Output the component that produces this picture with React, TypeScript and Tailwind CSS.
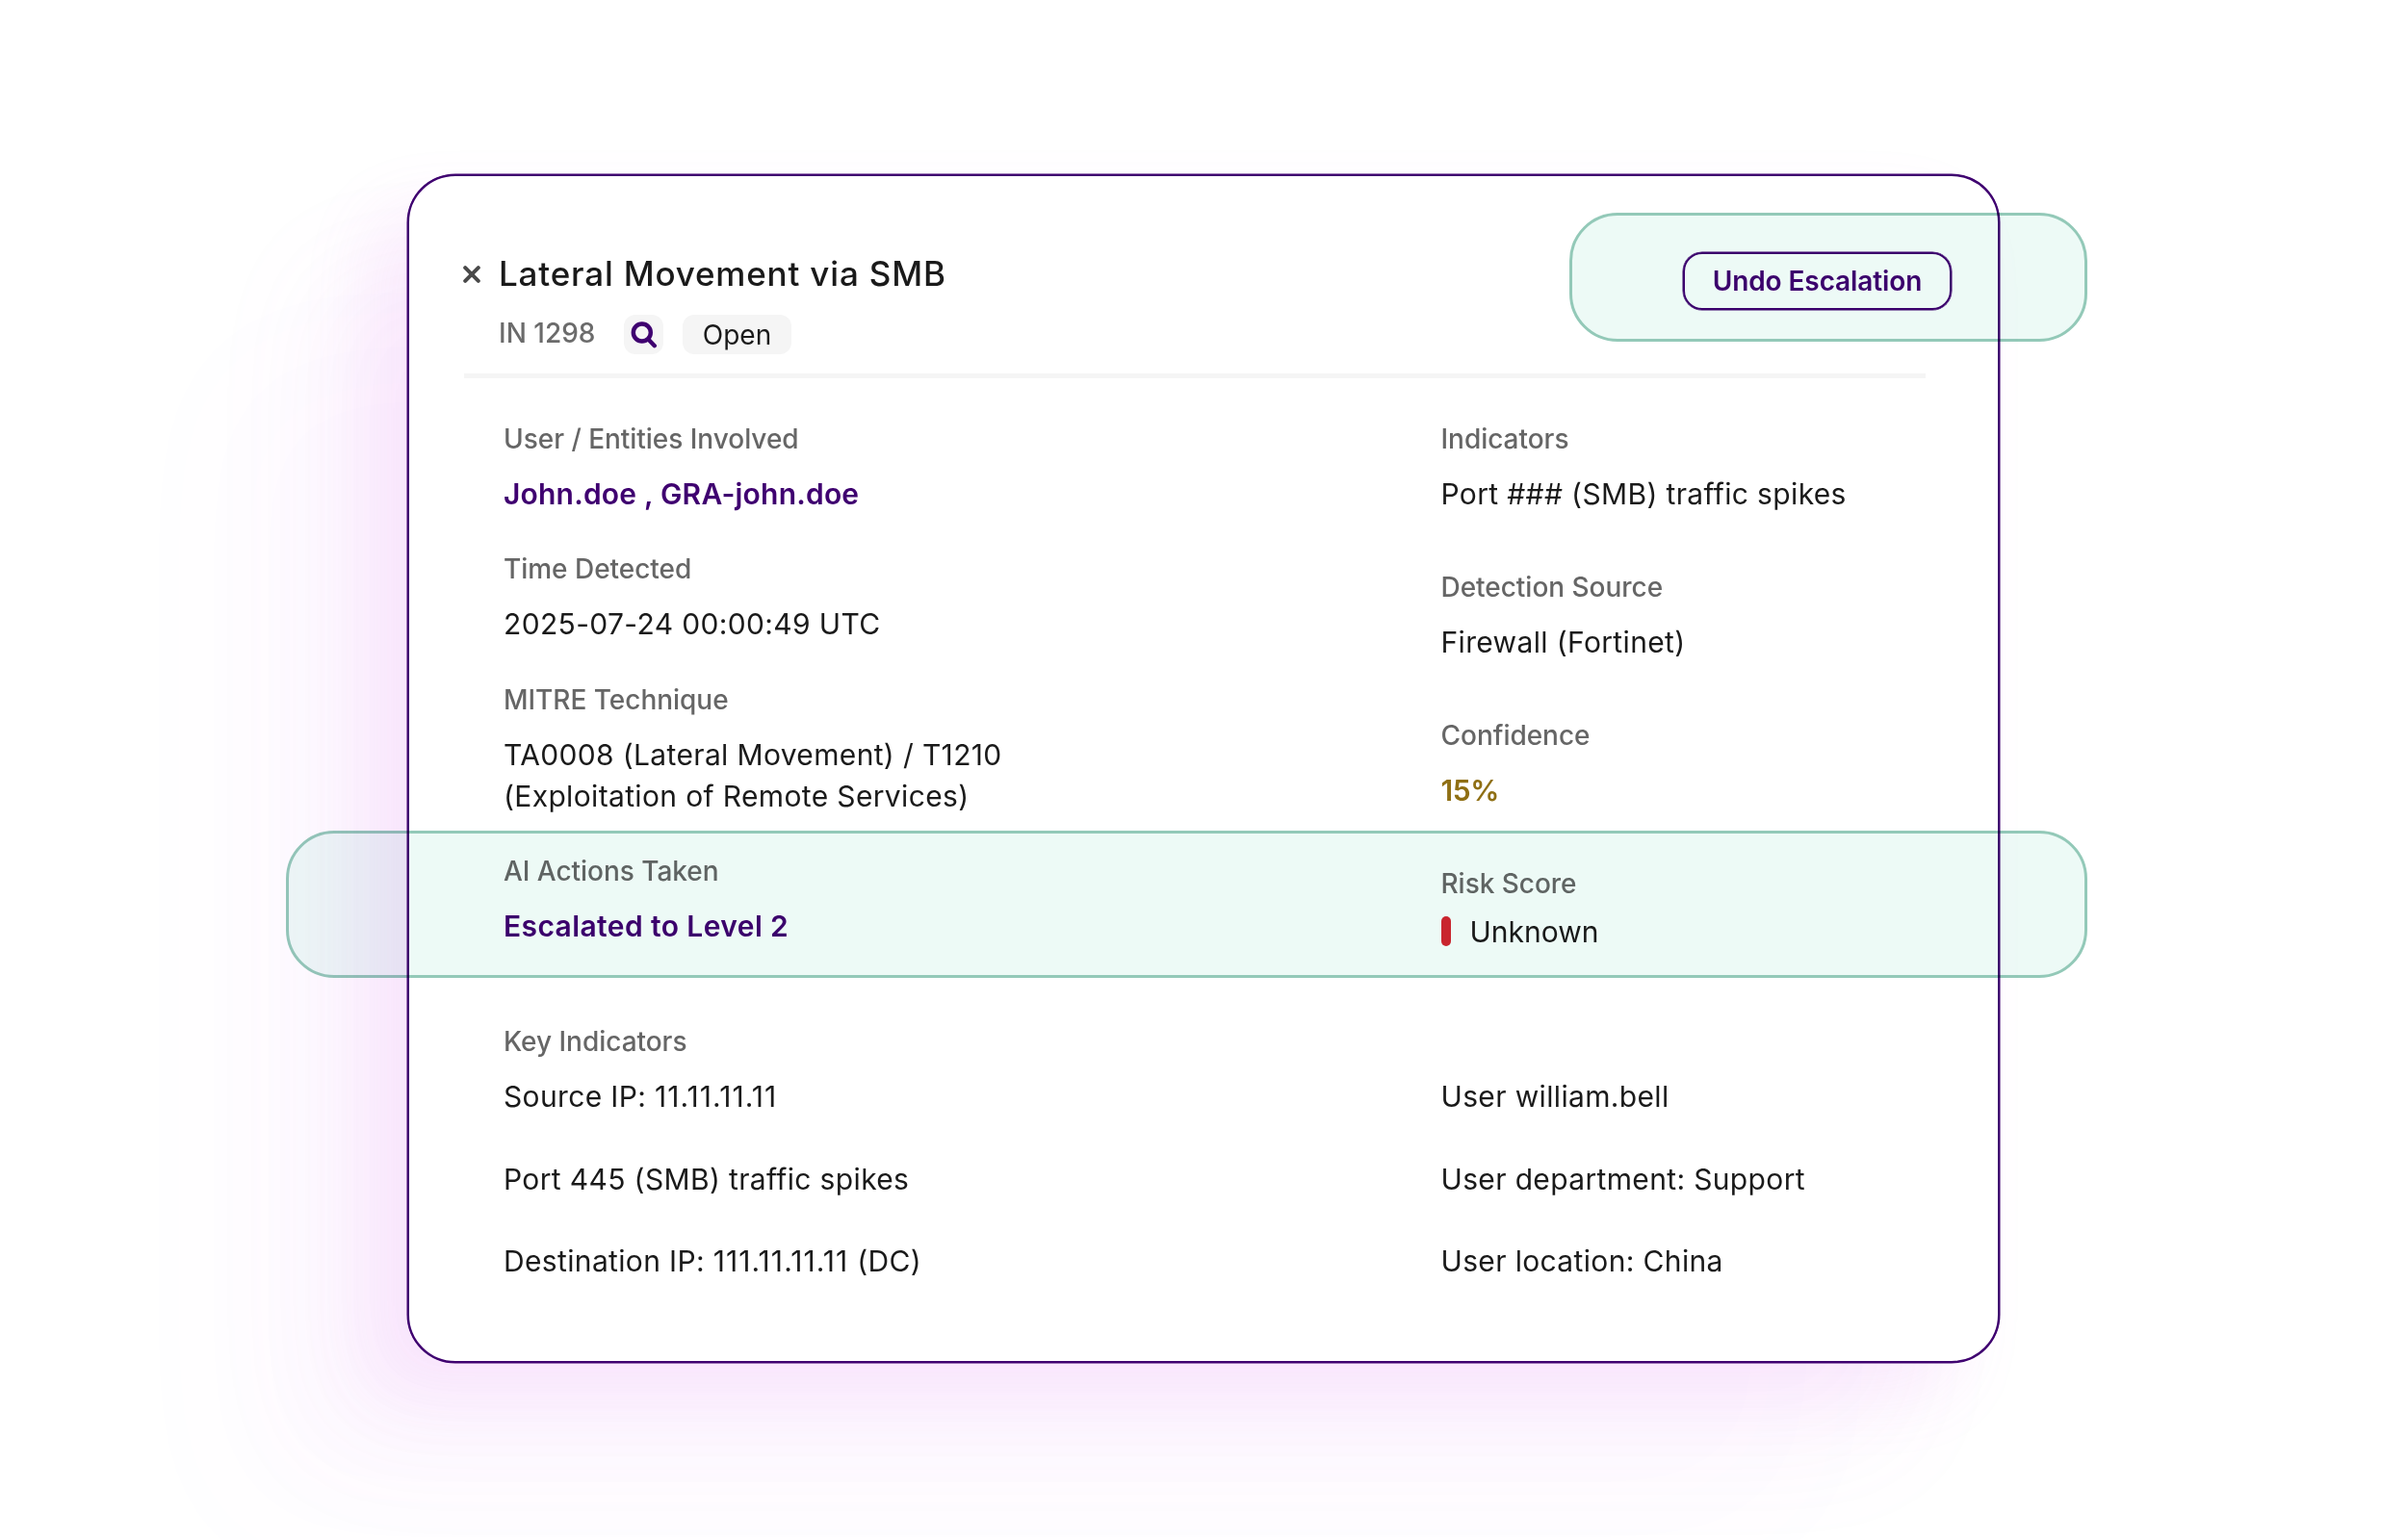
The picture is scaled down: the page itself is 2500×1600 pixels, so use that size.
import React from 'react';
import type { FunctionComponent, ReactNode } from 'react';

interface FieldProps {
  label: string;
  children: ReactNode;
}

const Field: FunctionComponent<FieldProps> = ({ label, children }) => {
  return (
    <div className="flex flex-col gap-[18px]">
      <div className="h-9 text-[28px] leading-9 font-medium tracking-[-0.03px] text-[#666666]">{label}</div>
      <div className="text-[30px] leading-[42.7px] tracking-[0.35px]">{children}</div>
    </div>
  );
};

const rightIndicators = ['User william.bell', 'User department: Support', 'User location: China'];

const App: FunctionComponent = () => {
  return (
    <div className="relative h-[1600px] w-[2500px] overflow-hidden bg-white pt-[181px] pl-[423px] font-['Inter',sans-serif] text-[#1a1a1a]">
      <div className="h-[1235px] w-[1654px] rounded-[50px] border-2 border-[#3f0070] bg-white pt-[75px] shadow-[0_0_0_0.5px_#3f0070,-42px_36px_70px_rgba(220,95,235,0.10),-100px_92px_125px_rgba(220,95,235,0.05),-200px_180px_170px_rgba(220,95,235,0.014)]">
        <div className="flex justify-between pr-[48px] pl-[56px]">
          <div className="flex gap-[19px]">
            <svg className="mt-[18px] h-[18px] w-[18px]" viewBox="0 0 18 18" fill="none" stroke="#4a4a4a" strokeWidth="4" strokeLinecap="round">
              <path d="M2.2 2.2 15.8 15.8M15.8 2.2 2.2 15.8" />
            </svg>
            <div>
              <h1 className="h-[52px] text-[35px] leading-[52px] font-medium tracking-[0.81px]">Lateral Movement via SMB</h1>
              <div className="mt-[17px] flex items-center">
                <span className="-mt-[4px] w-[130px] text-[28px] leading-10 font-medium text-[#6b6b6b]">IN 1298</span>
                <span className="flex h-[41px] w-[41px] items-center justify-center rounded-xl bg-[#f5f5f5]">
                  <svg className="h-[28px] w-[28px]" viewBox="0 0 28 28" fill="none" stroke="#3f0070" strokeWidth="4.4" strokeLinecap="round">
                    <circle cx="11.8" cy="11.5" r="9" />
                    <path d="m18.6 18.8 6.2 6.4" />
                  </svg>
                </span>
                <span className="ml-[20px] flex h-[41px] w-[113px] items-center justify-center rounded-xl bg-[#f5f5f5] text-[28px]">Open</span>
              </div>
            </div>
          </div>
          <button className="mt-[4px] h-[60px] w-[279px] rounded-[20px] border-[2.5px] border-[#3f0070] pb-px text-[28px] font-semibold tracking-[-0.1px] text-[#3f0070] shadow-[0_0_0_0.5px_#3f0070]">
            Undo Escalation
          </button>
        </div>

        <div className="mt-[20px] ml-[57px] h-[5px] w-[1518px] bg-[#f5f5f5]" />

        <div className="mt-[44.6px] ml-[98px] grid grid-cols-[973.5px_1fr]">
          <div className="flex flex-col gap-[39px]">
            <Field label="User / Entities Involved">
              <span className="font-semibold tracking-[0.2px] text-[#3f0070]">John.doe , GRA-john.doe</span>
            </Field>
            <Field label="Time Detected">2025-07-24 00:00:49 UTC</Field>
            <Field label="MITRE Technique">
              TA0008 (Lateral Movement) / T1210
              <br />
              (Exploitation of Remote Services)
            </Field>
            <Field label="AI Actions Taken">
              <span className="font-semibold tracking-[0.4px] text-[#3f0070]">Escalated to Level 2</span>
            </Field>
          </div>
          <div className="flex flex-col gap-[57.5px]">
            <Field label="Indicators">Port ### (SMB) traffic spikes</Field>
            <Field label="Detection Source">Firewall (Fortinet)</Field>
            <Field label="Confidence">
              <span className="font-semibold tracking-[-0.4px] text-[#8f6f14]">15%</span>
            </Field>
            <div className="flex flex-col gap-[10.4px]">
              <div className="h-9 text-[28px] leading-9 font-medium tracking-[-0.03px] text-[#666666]">Risk Score</div>
              <div className="flex items-center gap-[20px] text-[30px] leading-[42.7px]">
                <span className="h-[31px] w-[10px] rounded-full bg-[#d9252f]" />
                Unknown
              </div>
            </div>
          </div>
        </div>

        <div className="mt-[75px] ml-[98px] grid grid-cols-[973.5px_1fr] items-end">
          <Field label="Key Indicators">
            <div className="flex flex-col gap-[42.7px]">
              <div>
                Source IP: <span className="tracking-[1.05px]">11.11.11.11</span>
              </div>
              <div>Port 445 (SMB) traffic spikes</div>
              <div>
                Destination IP: <span className="tracking-[1.05px]">111.11.11.11</span> (DC)
              </div>
            </div>
          </Field>
          <div className="flex flex-col gap-[42.7px] text-[30px] leading-[42.7px] tracking-[0.35px]">
            {rightIndicators.map((item) => (
              <div key={item}>{item}</div>
            ))}
          </div>
        </div>
      </div>

      {/* Highlights laid over the card */}
      <div className="absolute top-[221px] left-[1630px] h-[134px] w-[538px] rounded-[50px] border-3 border-[#93c9b8] bg-[#edfaf6] mix-blend-multiply" />
      <div className="absolute top-[863px] left-[297px] h-[153px] w-[1871px] rounded-[50px] border-3 border-[#93c9b8] bg-[#edfaf6] mix-blend-multiply" />
    </div>
  );
};

export default App;
